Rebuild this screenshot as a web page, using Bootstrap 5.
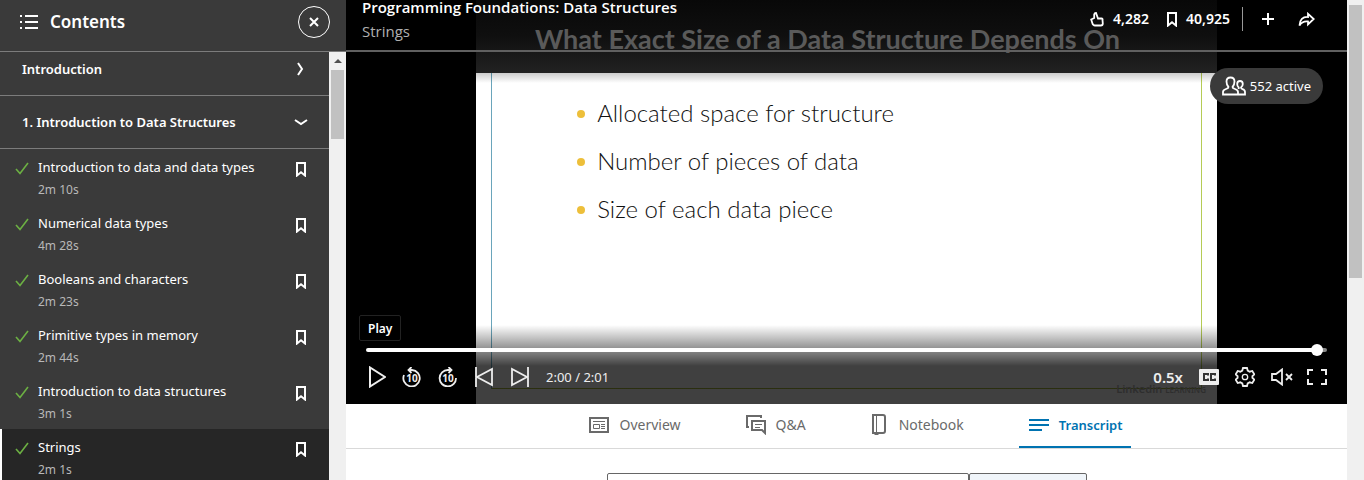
<!DOCTYPE html>
<html lang="en">
<head>
<meta charset="utf-8">
<meta name="viewport" content="width=device-width, initial-scale=1">
<title>Programming Foundations: Data Structures</title>
<link href="https://cdn.jsdelivr.net/npm/bootstrap@5.3.0/dist/css/bootstrap.min.css" rel="stylesheet">
<style>
  body { font-family: "Noto Sans", "Open Sans", sans-serif; font-size: 13px; line-height: 20px; }
  a { text-decoration: none; color: inherit; }
  svg { display: block; fill: none; stroke: currentColor; flex: none; }
  .plain { background: none; border: 0; padding: 0; color: inherit; }

  /* contents sidebar */
  .toc { width: 346px; background: #3a3a3a; color: #fff; }
  .toc-head { height: 52px; border-bottom: 1px solid #7c7c7c; padding: 0 16px 8px 20px; }
  .toc-head h2 { font-size: 17px; line-height: 24px; }
  .toc-close { width: 32px; height: 32px; border: 1px solid #fff; border-radius: 50%; }
  .toc-body { margin-top: -9px; }
  .section-row { height: 53px; border-bottom: 1px solid #7c7c7c; padding: 0 21px 0 22px; font-weight: 600; }
  .lesson { height: 56px; padding: 8px 23px 0 15px; }
  .lesson.current { background: #262626; border-left: 2px solid #fff; padding-left: 13px; }
  .lesson-time { font-size: 12px; line-height: 26px; color: #b8b8b8; }
  .tick { color: #6cb043; margin-top: 5px; margin-right: 9px; }
  .save { margin-top: 5px; }

  /* scroll bars */
  .bar { width: 17px; background: #f0f0f0; padding: 0 2px; }
  .bar-thumb { background: #c1c1c1; }
  .toc .bar-thumb { height: 69px; margin-top: 18px; }
  .page-bar .bar-thumb { height: 273px; margin-top: 5px; }
  .bar-up { position: absolute; left: 5px; top: 7px; border: 4px solid transparent; border-top: 0; border-bottom-color: #505050; }

  /* player */
  .player { display: grid; grid-template: 404px / 100%; background: #000; }
  .player > * { grid-area: 1 / 1; }
  .slide { width: 74%; margin: 0 auto; background: #fff; display: grid; grid-template-rows: 73px 1fr 15px; }
  .slide-title { background: linear-gradient(#080808, #0f0f0f 48%, #222); }
  .slide-title h1 { font-family: Lato, sans-serif; font-size: 27px; font-weight: 700; line-height: 30px; padding: 24px 38px 0 0; color: #5a5a5a; white-space: nowrap; }
  .slide-main { margin: 0 15px; border: 1px solid #6aa5bb; border-top: 0; border-right-color: #b5cc55; border-bottom-color: #a8b83a; }
  .slide-main ul { font-family: Lato, sans-serif; font-weight: 300; font-size: 24px; line-height: 48px; color: #111; padding: 16px 0 0 85px; }
  .slide-main li::before { content: ""; display: inline-block; width: 8px; height: 8px; border-radius: 50%; background: #edbf3a; margin-right: 12px; vertical-align: 4px; }
  .slide-foot { background: #fff; }
  .shade { background: linear-gradient(transparent 325px, rgba(0,0,0,.75) 366px); display: flex; flex-direction: column; color: #fff; }
  .player-head { height: 52px; border-bottom: 2px solid #606060; padding: 0 16px; }
  .player-head h3, .player-head p { font-family: "Open Sans", sans-serif; font-size: 15px; }
  .player-head h3 { line-height: 15px; font-weight: 600; }
  .player-head p { line-height: 20px; margin-top: 6px; color: #b0b0b0; }
  .actions { height: 38px; font-size: 14px; }
  .count { gap: 9px; margin-right: 18px; }
  .rule { width: 1px; height: 24px; background: #999; margin: 0 19px 0 -6px; }
  .title-shadow { width: 74%; height: 10px; margin: 21px auto 0; background: linear-gradient(rgba(0,0,0,.2), transparent); }
  .active-pill { position: absolute; right: 24px; top: 68px; height: 36px; border-radius: 18px; background: #3a3a3a; padding: 0 12px; }
  .play-tip { position: absolute; left: 13px; top: 315px; height: 26px; border: 1px solid #222; border-radius: 2px; background: #000; color: #fff; padding: 3px 8px 0; font-size: 12px; font-weight: 600; }
  .watermark { position: absolute; right: 141px; top: 383px; color: #2e2e2e; font-size: 11px; line-height: 12px; font-weight: 600; }
  .watermark small { font-size: 8px; }
  .seek { appearance: none; -webkit-appearance: none; display: block; height: 12px; margin: 0 20px; background: none; }
  .seek::-webkit-slider-runnable-track { height: 4px; border-radius: 2px; background: linear-gradient(90deg, #fff 99%, #888 99%); }
  .seek::-webkit-slider-thumb { -webkit-appearance: none; width: 12px; height: 12px; margin-top: -4px; border-radius: 50%; background: #fff; border: 0; }
  .controls { height: 42px; padding: 0 20px 0 21px; margin-bottom: 6px; color: #eee; }
  .speed { font-size: 15px; font-weight: 600; }
  .cc { background: #eee; color: #333; width: 20px; height: 16px; border-radius: 1px; }
  .mute { margin-right: 14px; }

  /* tabs and transcript */
  .tabs { height: 45px; border-bottom: 1px solid #d9d9d9; gap: 47px; padding-left: 17px; color: #6a6a6a; font-size: 14px; }
  .tab { gap: 10px; padding: 0 8px 2px 10px; height: 44px; }
  .tab.on { color: #0073b1; font-size: 13px; font-weight: 600; border-bottom: 2px solid #0073b1; padding-bottom: 0; }
  .find { width: 480px; margin-top: 24px; }
  .find input, .find button { height: 36px; border: 1px solid #666; border-radius: 2px; }
  .find button { width: 118px; background: #f0f5fa; }
</style>
</head>
<body class="vh-100 overflow-hidden d-flex bg-white">

<svg class="d-none">
  <symbol id="tick" viewBox="0 0 14 13"><path d="M1 7l4 4.500L13 1" stroke-width="1.600"/></symbol>
  <symbol id="flag" viewBox="0 0 10 15"><path d="M1 1h8v12.500L5 10.300 1 13.500z" stroke-width="2"/></symbol>
</svg>

<aside class="toc flex-shrink-0 d-flex flex-column">
  <div class="toc-head d-flex align-items-center flex-shrink-0">
    <svg width="18" height="16" viewBox="0 0 18 16" stroke-width="2"><path d="M5 2h13M5 8h13M5 14h13M0 2h2M0 8h2M0 14h2"/></svg>
    <h2 class="mb-0 ms-2 ps-1 me-auto fw-semibold">Contents</h2>
    <button class="plain toc-close d-flex align-items-center justify-content-center" aria-label="Close contents">
      <svg width="10" height="10" viewBox="0 0 10 10" stroke-width="2"><path d="M1 1l8 8M9 1L1 9"/></svg>
    </button>
  </div>
  <div class="d-flex flex-grow-1 overflow-hidden">
    <div class="toc-body flex-grow-1">
      <button class="plain section-row w-100 d-flex align-items-center justify-content-between">Introduction
        <svg class="me-1" width="7" height="14" viewBox="0 0 7 14" stroke-width="2"><path d="M1 1l4 6-4 6"/></svg></button>
      <button class="plain section-row w-100 d-flex align-items-center justify-content-between">1. Introduction to Data Structures
        <svg width="14" height="7" viewBox="0 0 14 7" stroke-width="2"><path d="M1 1l6 4 6-4"/></svg></button>
      <div class="lesson d-flex"><svg class="tick" width="14" height="13"><use href="#tick"/></svg>
        <a href="#" class="flex-grow-1">Introduction to data and data types<span class="lesson-time d-block">2m 10s</span></a>
        <button class="plain save align-self-start" aria-label="Save"><svg width="10" height="15"><use href="#flag"/></svg></button></div>
      <div class="lesson d-flex"><svg class="tick" width="14" height="13"><use href="#tick"/></svg>
        <a href="#" class="flex-grow-1">Numerical data types<span class="lesson-time d-block">4m 28s</span></a>
        <button class="plain save align-self-start" aria-label="Save"><svg width="10" height="15"><use href="#flag"/></svg></button></div>
      <div class="lesson d-flex"><svg class="tick" width="14" height="13"><use href="#tick"/></svg>
        <a href="#" class="flex-grow-1">Booleans and characters<span class="lesson-time d-block">2m 23s</span></a>
        <button class="plain save align-self-start" aria-label="Save"><svg width="10" height="15"><use href="#flag"/></svg></button></div>
      <div class="lesson d-flex"><svg class="tick" width="14" height="13"><use href="#tick"/></svg>
        <a href="#" class="flex-grow-1">Primitive types in memory<span class="lesson-time d-block">2m 44s</span></a>
        <button class="plain save align-self-start" aria-label="Save"><svg width="10" height="15"><use href="#flag"/></svg></button></div>
      <div class="lesson d-flex"><svg class="tick" width="14" height="13"><use href="#tick"/></svg>
        <a href="#" class="flex-grow-1">Introduction to data structures<span class="lesson-time d-block">3m 1s</span></a>
        <button class="plain save align-self-start" aria-label="Save"><svg width="10" height="15"><use href="#flag"/></svg></button></div>
      <div class="lesson current d-flex"><svg class="tick" width="14" height="13"><use href="#tick"/></svg>
        <a href="#" class="flex-grow-1">Strings<span class="lesson-time d-block">2m 1s</span></a>
        <button class="plain save align-self-start" aria-label="Save"><svg width="10" height="15"><use href="#flag"/></svg></button></div>
    </div>
    <div class="bar position-relative"><span class="bar-up"></span><div class="bar-thumb"></div></div>
  </div>
</aside>

<main class="flex-grow-1 overflow-hidden">
  <section class="player position-relative">
    <div class="slide">
      <div class="slide-title text-center"><h1 class="mb-0">What Exact Size of a Data Structure Depends On</h1></div>
      <div class="slide-main">
        <ul class="list-unstyled mb-0">
          <li>Allocated space for structure</li>
          <li>Number of pieces of data</li>
          <li>Size of each data piece</li>
        </ul>
      </div>
      <div class="slide-foot"></div>
    </div>
    <div class="shade">
      <div class="player-head d-flex justify-content-between">
        <div><h3 class="mb-0">Programming Foundations: Data Structures</h3><p class="mb-0">Strings</p></div>
        <div class="actions d-flex align-items-center pe-3">
          <button class="plain count d-flex align-items-center fw-semibold"><svg width="14" height="15" viewBox="0 0 14 15" stroke-width="1.800"><path d="M1.200 7.500L4.200 6V2.500Q4.500 1 6 1L8 6.500h3.500q1.500 0 1 1.500l.300 3.500q0 2-2 2H5Q3 13.500 2.300 11z"/></svg>4,282</button>
          <button class="plain count d-flex align-items-center fw-semibold"><svg width="10" height="15"><use href="#flag"/></svg>40,925</button>
          <span class="rule"></span>
          <button class="plain me-4" aria-label="Add"><svg width="12" height="12" viewBox="0 0 12 12" stroke-width="2"><path d="M6 0v12M0 6h12"/></svg></button>
          <button class="plain" aria-label="Share"><svg width="17" height="15" viewBox="0 0 17 15" stroke-width="1.800"><path d="M10 1.800V5Q2 4.500 1.500 13.500 4 9 10 9.500v3L15.700 7z"/></svg></button>
        </div>
      </div>
      <div class="title-shadow"></div>
      <input type="range" class="seek mt-auto" min="0" max="240" value="239" aria-label="Seek">
      <div class="controls d-flex align-items-center">
        <button class="plain me-3" aria-label="Play"><svg width="19" height="22" viewBox="0 0 19 22" stroke-width="2"><path d="M3 1.500v19L18 11z"/></svg></button>
        <button class="plain me-3" aria-label="Back 10 seconds"><svg width="20" height="20" viewBox="0 0 20 20" stroke-width="1.800"><path d="M2 8a8.200 8.200 0 1 0 8-5H6.500M9.500 0L6.500 3l3 3"/><text x="10" y="14.500" font-size="10" font-weight="700" text-anchor="middle" fill="currentColor" stroke="none">10</text></svg></button>
        <button class="plain me-3" aria-label="Forward 10 seconds"><svg width="20" height="20" viewBox="0 0 20 20" stroke-width="1.800"><path d="M18 11a8.200 8.200 0 1 1-8-8h3M10.500 0l3 3-3 3"/><text x="10" y="14.500" font-size="10" font-weight="700" text-anchor="middle" fill="currentColor" stroke="none">10</text></svg></button>
        <button class="plain me-3" aria-label="Previous"><svg width="20" height="20" viewBox="0 0 20 20" stroke-width="1.800"><path d="M2 0v20M18 2v16L3 10z"/></svg></button>
        <button class="plain me-3" aria-label="Next"><svg width="20" height="20" viewBox="0 0 20 20" stroke-width="1.800"><path d="M18 0v20M2 2v16l15-8z"/></svg></button>
        <span class="me-auto">2:00 / 2:01</span>
        <button class="plain speed me-3">0.5x</button>
        <button class="plain cc me-3" aria-label="Captions"><svg width="20" height="16" viewBox="0 0 20 16" stroke-width="2"><path d="M9 6.500V5H5v6h4V9.500M16 6.500V5h-4v6h4V9.500"/></svg></button>
        <button class="plain me-3" aria-label="Settings"><svg width="20" height="20" viewBox="0 0 20 20" stroke-width="1.800"><path d="M8 1h4l.700 2.600 2 1.100 2.600-.700 2 3.400L17.400 9.200v1.600l1.900 1.800-2 3.400-2.600-.700-2 1.100L12 19H8l-.700-2.600-2-1.100-2.600.700-2-3.400 1.900-1.800V9.200L.700 7.400l2-3.400 2.600.700 2-1.100z"/><circle cx="10" cy="10" r="2.700" stroke-width="1.300"/></svg></button>
        <button class="plain mute" aria-label="Unmute"><svg width="22" height="18" viewBox="0 0 22 18" stroke-width="1.800"><path d="M1 6v6h4l6 4.500v-15L5 6zM15 6l6 6M21 6l-6 6"/></svg></button>
        <button class="plain" aria-label="Full screen"><svg width="20" height="16" viewBox="0 0 20 16" stroke-width="2"><path d="M1 6V1h5M14 1h5v5M19 10v5h-5M6 15H1v-5"/></svg></button>
      </div>
    </div>
    <div class="watermark">Linked<span>in</span> <small>LEARNING</small></div>
    <div class="play-tip" role="tooltip">Play</div>
    <div class="active-pill d-flex align-items-center text-white">
      <svg class="me-1" width="24" height="20" viewBox="0 0 24 20" stroke-width="1.800"><path d="M1 18.500v-2.500q0-2 3-3 2.500-.800 2.500-2Q4.500 9 4.500 5.500 4.500 1.500 8.500 1.500t4 4Q12.500 9 10.500 11q0 1.200 2.500 2 3 1 3 3v2.500zM16 18.500h7V16q0-2-2.500-2.800-1.500-.500-1.500-1.700 1.800-1.200 1.800-3.500 0-3-2.800-3t-2.800 3q0 2.300 1.500 3.500v1.500"/></svg>552 active
    </div>
  </section>

  <nav class="tabs d-flex justify-content-center">
    <a href="#" class="tab d-flex align-items-center"><svg width="20" height="16" viewBox="0 0 20 16"><path d="M1 1h18v14H1z" stroke-width="2"/><path d="M4 4.500h12M12 7.500h4M12 9.500h4M12 11.500h4M4.500 7.500h6v4h-6z"/></svg>Overview</a>
    <a href="#" class="tab d-flex align-items-center"><svg width="20" height="20" viewBox="0 0 20 20"><path d="M3 12H1V1h14v2M6 6h13v12l-3-3H6z" stroke-width="2"/><path d="M9 9.500h7M9 12.500h5"/></svg>Q&amp;A</a>
    <a href="#" class="tab d-flex align-items-center"><svg width="18" height="22" viewBox="0 0 18 22"><path d="M2 1h10q2 0 2 2v14q0 2-2 2H2z" stroke-width="2"/><path d="M5.500 1v18M3.500 20.500h4"/></svg>Notebook</a>
    <a href="#" class="tab on d-flex align-items-center"><svg width="20" height="12" viewBox="0 0 20 12" stroke-width="2"><path d="M0 1h20M0 6h20M0 11h13"/></svg>Transcript</a>
  </nav>
  <form class="find d-flex mx-auto">
    <input type="search" class="flex-grow-1" aria-label="Search in transcript"><button type="button" aria-label="Search"></button>
  </form>
</main>

<div class="bar page-bar flex-shrink-0"><div class="bar-thumb"></div></div>

<script src="https://cdn.jsdelivr.net/npm/bootstrap@5.3.0/dist/js/bootstrap.bundle.min.js"></script>
</body>
</html>
